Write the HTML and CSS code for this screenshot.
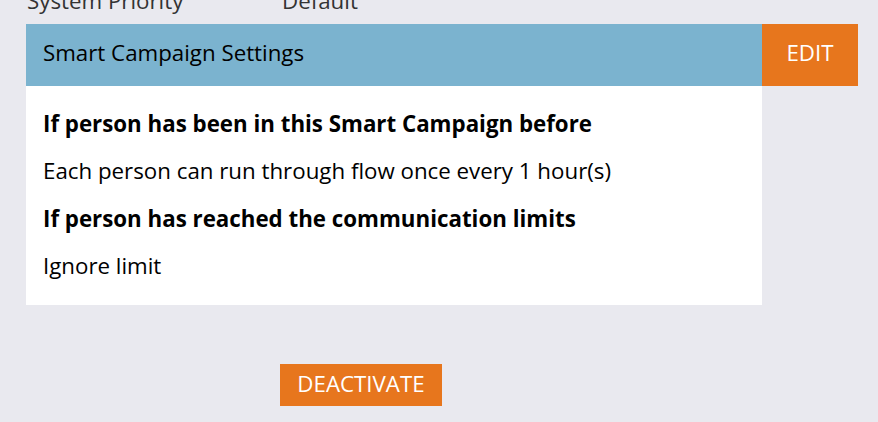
FILE: index.html
```html
<!DOCTYPE html>
<html>
<head>
<meta charset="utf-8">
<link rel="stylesheet" href="styles.css">
</head>
<body>
<div class="page">
  <div class="meta-row">
    <span class="meta-label">System Priority</span>
    <span class="meta-value">Default</span>
  </div>
  <div class="card">
    <div class="card-head">
      <div class="card-title">Smart Campaign Settings</div>
      <button class="btn btn-edit">EDIT</button>
    </div>
    <div class="card-body">
      <p class="q">If person has been in this Smart Campaign before</p>
      <p class="a">Each person can run through flow once every 1 hour(s)</p>
      <p class="q">If person has reached the communication limits</p>
      <p class="a">Ignore limit</p>
    </div>
  </div>
  <div class="actions">
    <button class="btn btn-deactivate">DEACTIVATE</button>
  </div>
</div>
</body>
</html>
```
FILE: styles.css
```css
html, body {
  margin: 0;
  padding: 0;
  background: #e9e9ef;
  font-family: "Open Sans", "Liberation Sans", sans-serif;
  color: #000;
}
.page {
  padding-left: 26px;
}
.meta-row {
  display: flex;
  margin-top: -14.5px;
  height: 30px;
  line-height: 30px;
  font-size: 22.3px;
  color: #333;
}
.meta-label {
  width: 255px;
  padding-left: 1px;
}
.card {
  margin-top: 8.5px;
}
.card-head {
  display: flex;
  height: 62px;
}
.card-title {
  width: 736px;
  height: 62px;
  box-sizing: border-box;
  background: #7bb3cf;
  padding-left: 17px;
  font-size: 22.3px;
  line-height: 57px;
  color: #000;
}
.btn {
  border: 0;
  margin: 0;
  background: #e7761d;
  color: #fff;
  font-family: "Open Sans", "Liberation Sans", sans-serif;
  font-size: 22.3px;
  line-height: 30px;
  padding: 0;
  cursor: pointer;
}
.btn-edit {
  width: 96px;
  height: 62px;
  padding-bottom: 5px;
}
.card-body {
  width: 736px;
  height: 219px;
  box-sizing: border-box;
  background: #fff;
  padding: 22.5px 17px 24px;
  display: flex;
  flex-direction: column;
  gap: 17.5px;
}
.card-body p {
  margin: 0;
  font-size: 22.3px;
  line-height: 30px;
}
.q {
  font-weight: 700;
}
.actions {
  padding-left: 254px;
  margin-top: 59px;
}
.btn-deactivate {
  width: 162px;
  height: 42px;
  padding-bottom: 2px;
}
```
